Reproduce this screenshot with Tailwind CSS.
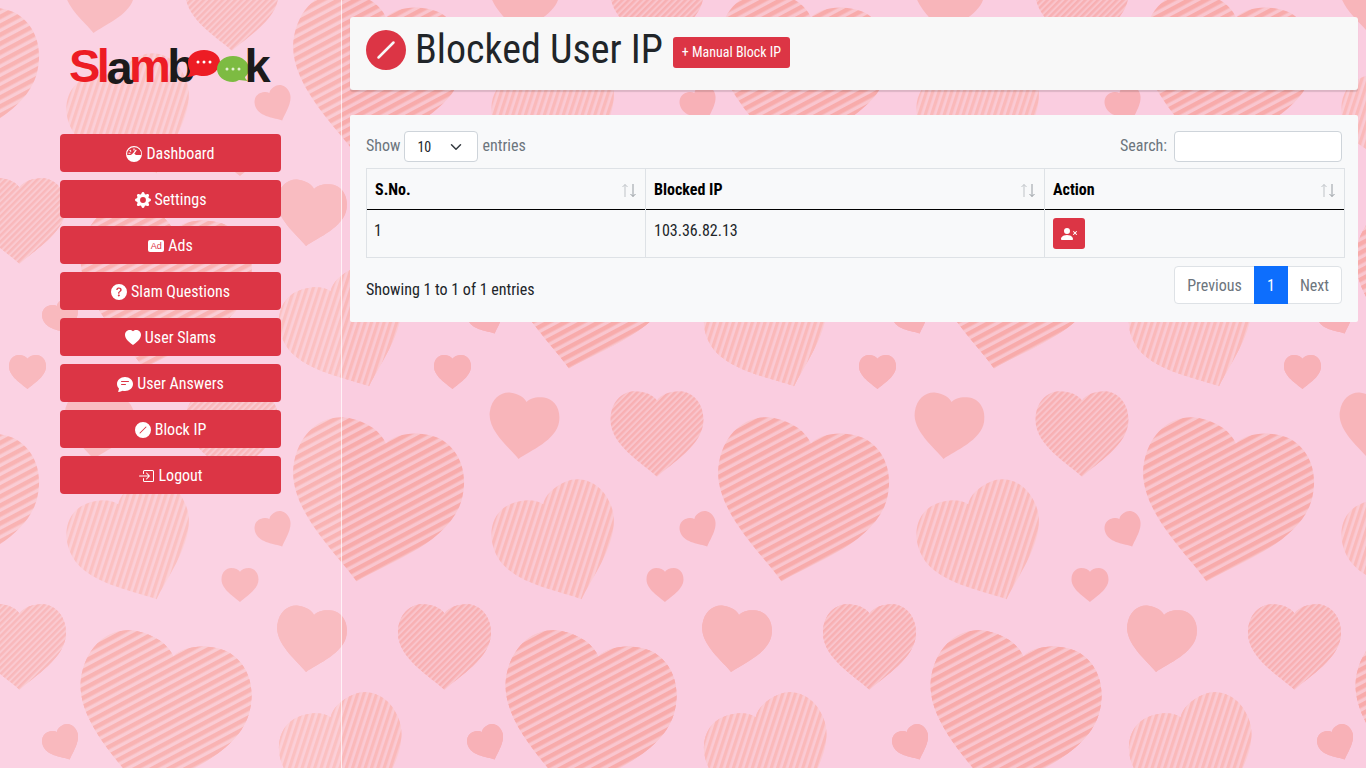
<!DOCTYPE html>
<html lang="en">

<head>
    <meta charset="UTF-8">
    <meta name="viewport" content="width=device-width, initial-scale=1.0">
    <title>Blocked User IP</title>
    <script src="https://cdn.jsdelivr.net/npm/@tailwindcss/browser@4"></script>
</head>

<body class="relative h-[768px] w-[1366px] overflow-hidden bg-[#facde0] font-['Roboto_Condensed',Roboto,sans-serif] font-stretch-condensed">

    <!-- wallpaper: half-drop repeat of six hearts -->
    <svg class="absolute inset-0" width="1366" height="768" aria-hidden="true">
        <defs>
            <pattern id="bigStripe" width="5" height="4.6" patternUnits="userSpaceOnUse" patternTransform="rotate(-40)">
                <rect width="5" height="4.6" fill="#f9c6cf" />
                <rect width="5" height="2.6" fill="#f8abab" />
            </pattern>
            <pattern id="lightStripe" width="5" height="4.8" patternUnits="userSpaceOnUse" patternTransform="rotate(-50)">
                <rect width="5" height="4.8" fill="#facad4" />
                <rect width="5" height="2.6" fill="#fab9ba" />
            </pattern>
            <pattern id="fineStripe" width="5" height="4.8" patternUnits="userSpaceOnUse" patternTransform="rotate(-45)">
                <rect width="5" height="4.8" fill="#f9c4cc" />
                <rect width="5" height="2.6" fill="#f8b0b3" />
            </pattern>
            <path id="heart" d="M0 46C-15 32-50 12-50-15C-50-35-37-46-24-46C-13-46-4-42 0-36C4-42 13-46 24-46C37-46 50-35 50-15C50 12 15 32 0 46Z" />
            <g id="motifs">
                <use href="#heart" fill="url(#bigStripe)" transform="translate(798 504) rotate(12) scale(1.72)" />
                <use href="#heart" fill="url(#lightStripe)" transform="translate(560 546) rotate(-22) scale(1.25)" />
                <use href="#heart" fill="url(#fineStripe)" transform="translate(657 434) scale(.93)" />
                <use href="#heart" fill="#f8b5ba" transform="translate(523 427) rotate(8) scale(.7)" />
                <use href="#heart" fill="#f8b1b7" transform="translate(665 585) scale(.37)" />
                <use href="#heart" fill="#f8b1b7" transform="translate(700 531) rotate(-25) scale(.37)" />
            </g>
            <g id="row">
                <use href="#motifs" x="-850" />
                <use href="#motifs" x="-425" />
                <use href="#motifs" />
                <use href="#motifs" x="425" />
                <use href="#motifs" x="850" />
            </g>
        </defs>
        <use href="#row" y="-426" />
        <use href="#row" x="-212.5" y="-213" />
        <use href="#row" />
        <use href="#row" x="-212.5" y="213" />
        <use href="#row" x="212.5" y="-213" />
        <use href="#row" x="212.5" y="213" />
    </svg>

    <div class="relative flex h-full">
        <!-- sidebar -->
        <aside class="w-[342px] h-full shrink-0 border-r border-white/70 bg-white/10 pl-[60px]">
            <div class="relative mt-[41px] flex h-[50px] w-[221px] items-end pl-[9px] font-['Liberation_Sans',sans-serif] text-[47px] leading-[50px] font-bold tracking-[-3.5px] font-stretch-normal">
                <span class="text-[#ed1c24]">Sl</span><span class="relative top-[2px] text-[#1c1a1b]">a</span><span class="text-[#ed1c24]">m</span><span class="text-[#1c1a1b]">b</span>
                <svg class="absolute left-[124px] top-[8px]" width="82" height="40" viewBox="0 0 82 40">
                    <path d="M20 1C29 1 36 6 36 13S29 27 20 27C17 27 14 26.500 12 26C9 27 6 28 3 28C5 26 6 24 6 22C4.500 19 4 16 4 13C4 6 11 1 20 1Z" fill="#ed1c24" />
                    <circle cx="14" cy="13" r="1.500" fill="#fff" /><circle cx="20" cy="13" r="1.500" fill="#fff" /><circle cx="26" cy="13" r="1.500" fill="#fff" />
                    <g transform="translate(3 0)">
                        <path d="M46 7C55 7 62 13 62 20C62 24 60 26 58 28C58 29 59 31 61 32C58 32 55 31 52 31C50 32 48 33 46 33C37 33 30 27 30 20S37 7 46 7Z" fill="#7dbb42" />
                        <circle cx="40" cy="20" r="1.500" fill="#e4f0d0" /><circle cx="46" cy="20" r="1.500" fill="#e4f0d0" /><circle cx="52" cy="20" r="1.500" fill="#e4f0d0" />
                    </g>
                </svg>
                <span class="relative ml-[52px] text-[#1c1a1b]">k</span>
            </div>

            <nav class="mt-[43px] flex w-[221px] flex-col gap-2 text-base text-white">
                <a class="flex h-[38px] items-center justify-center gap-1 rounded bg-[#dc3545] pt-[2px]">
                    <svg width="16" height="16" viewBox="0 0 16 16" fill="#fff">
                        <path fill-rule="evenodd" d="M8 0a8 8 0 1 1 0 16A8 8 0 0 1 8 0Zm0 1.200A6.800 6.800 0 0 0 1.300 9h3.900c.3-.7.900-1.200 1.600-1.400l3-4 .9.700-2.400 3.400c.6.300 1.200.7 1.500 1.300h5.300A6.800 6.800 0 0 0 8 1.200ZM7.400 2.500h1.200v2H7.400Zm-3.300 1.200 1.400 1.400-.8.8L3.300 4.500Zm-1.600 3h2v1.100h-2Z" />
                    </svg>Dashboard</a>
                <a class="flex h-[38px] items-center justify-center gap-1 rounded bg-[#dc3545] pt-[2px]">
                    <svg width="16" height="16" viewBox="0 0 16 16" fill="#fff">
                        <path d="M9.405 1.05c-.413-1.4-2.397-1.4-2.81 0l-.1.34a1.464 1.464 0 0 1-2.105.872l-.31-.17c-1.283-.698-2.686.705-1.987 1.987l.169.311c.446.82.023 1.841-.872 2.105l-.34.1c-1.4.413-1.4 2.397 0 2.81l.34.1a1.464 1.464 0 0 1 .872 2.105l-.17.31c-.698 1.283.705 2.686 1.987 1.987l.311-.169a1.464 1.464 0 0 1 2.105.872l.1.34c.413 1.4 2.397 1.4 2.81 0l.1-.34a1.464 1.464 0 0 1 2.105-.872l.31.17c1.283.698 2.686-.705 1.987-1.987l-.169-.311a1.464 1.464 0 0 1 .872-2.105l.34-.1c1.4-.413 1.4-2.397 0-2.81l-.34-.1a1.464 1.464 0 0 1-.872-2.105l.17-.31c.698-1.283-.705-2.686-1.987-1.987l-.311.169a1.464 1.464 0 0 1-2.105-.872l-.1-.34zM8 10.93a2.929 2.929 0 1 1 0-5.86 2.929 2.929 0 0 1 0 5.858z" />
                    </svg>Settings</a>
                <a class="flex h-[38px] items-center justify-center gap-1 rounded bg-[#dc3545] pt-[2px]">
                    <span class="flex h-[12px] w-4 items-center justify-center rounded-[2px] bg-white font-['Liberation_Sans',sans-serif] text-[9px] leading-none text-[#dc3545] font-stretch-normal">Ad</span>Ads</a>
                <a class="flex h-[38px] items-center justify-center gap-1 rounded bg-[#dc3545] pt-[2px]">
                    <svg width="16" height="16" viewBox="0 0 16 16" fill="#fff">
                        <path d="M16 8A8 8 0 1 1 0 8a8 8 0 0 1 16 0zM5.496 6.033h.825c.138 0 .248-.113.266-.25.09-.656.54-1.134 1.342-1.134.686 0 1.314.343 1.314 1.168 0 .635-.374.927-.965 1.371-.673.489-1.206 1.06-1.168 1.987l.003.217a.25.25 0 0 0 .25.246h.811a.25.25 0 0 0 .25-.25v-.105c0-.718.273-.927 1.01-1.486.609-.463 1.244-.977 1.244-2.056 0-1.511-1.276-2.241-2.673-2.241-1.267 0-2.655.59-2.75 2.286a.237.237 0 0 0 .241.247zm2.325 6.443c.61 0 1.029-.394 1.029-.927 0-.552-.42-.94-1.029-.94-.584 0-1.009.388-1.009.94 0 .533.425.927 1.01.927z" />
                    </svg>Slam Questions</a>
                <a class="flex h-[38px] items-center justify-center gap-1 rounded bg-[#dc3545] pt-[2px]">
                    <svg width="16" height="16" viewBox="0 0 16 16" fill="#fff">
                        <path fill-rule="evenodd" d="M8 1.314C12.438-3.248 23.534 4.735 8 15-7.534 4.736 3.562-3.248 8 1.314z" />
                    </svg>User Slams</a>
                <a class="flex h-[38px] items-center justify-center gap-1 rounded bg-[#dc3545] pt-[2px]">
                    <svg width="16" height="16" viewBox="0 0 16 16" fill="#fff">
                        <path d="M16 8c0 3.866-3.582 7-8 7a9.060 9.060 0 0 1-2.347-.306c-.584.296-1.925.864-4.181 1.234-.2.032-.352-.176-.273-.362.354-.836.674-1.950.770-2.966C.744 11.370 0 9.760 0 8c0-3.866 3.582-7 8-7s8 3.134 8 7zM4.500 5a.5.5 0 0 0 0 1h7a.5.5 0 0 0 0-1h-7zm0 3a.5.5 0 0 0 0 1h4a.5.5 0 0 0 0-1h-4z" />
                    </svg>User Answers</a>
                <a class="flex h-[38px] items-center justify-center gap-1 rounded bg-[#dc3545] pt-[2px]">
                    <svg width="16" height="16" viewBox="0 0 16 16" fill="#fff">
                        <path d="M16 8A8 8 0 1 1 0 8a8 8 0 0 1 16 0zm-4.646-2.646a.5.5 0 0 0-.708-.708l-6 6a.5.5 0 0 0 .708.708l6-6z" />
                    </svg>Block IP</a>
                <a class="flex h-[38px] items-center justify-center gap-1 rounded bg-[#dc3545] pt-[2px]">
                    <svg width="16" height="16" viewBox="0 0 16 16" fill="#fff">
                        <path fill-rule="evenodd" d="M6 3.5a.5.5 0 0 1 .5-.5h8a.5.5 0 0 1 .5.5v9a.5.5 0 0 1-.5.5h-8a.5.5 0 0 1-.5-.5v-2a.5.5 0 0 0-1 0v2A1.500 1.500 0 0 0 6.500 14h8a1.500 1.500 0 0 0 1.500-1.500v-9A1.500 1.500 0 0 0 14.500 2h-8A1.500 1.500 0 0 0 5 3.500v2a.5.5 0 0 0 1 0v-2z" />
                        <path fill-rule="evenodd" d="M11.854 8.354a.5.5 0 0 0 0-.708l-3-3a.5.5 0 1 0-.708.708L10.293 7.500H1.500a.5.5 0 0 0 0 1h8.793l-2.147 2.146a.5.5 0 0 0 .708.708l3-3z" />
                    </svg>Logout</a>
            </nav>
        </aside>

        <!-- main -->
        <main class="ml-2 w-[1008px] pt-[17px]">
            <div class="flex h-[73px] items-center rounded-[3px] bg-[#f8f8f8] pb-[7px] pl-4 shadow-[0_2px_1px_rgba(0,0,0,0.12)]">
                <svg width="40" height="40" viewBox="0 0 16 16" fill="#dc3545">
                    <path d="M16 8A8 8 0 1 1 0 8a8 8 0 0 1 16 0zm-4.646-2.646a.5.5 0 0 0-.708-.708l-6 6a.5.5 0 0 0 .708.708l6-6z" />
                </svg>
                <h1 class="ml-[9px] text-[40px] leading-[48px] text-[#212529]">Blocked User IP</h1>
                <a class="ml-[10px] mt-1 flex h-[31px] w-[117px] items-center justify-center rounded-[3px] bg-[#dc3545] text-sm text-white">+ Manual Block IP</a>
            </div>

            <div class="mt-[25px] h-[207px] rounded-[2px] bg-[#f8f9fa] px-4 pt-4">
                <div class="flex h-[31px] w-[976px] items-center text-base text-[#6c757d]">
                    <span class="pb-[2px]">Show</span>
                    <div class="ml-1 flex h-[31px] w-[74px] items-center justify-between rounded border border-[#ced4da] bg-white pl-3 pr-[15px] text-sm text-[#212529]">
                        10
                        <svg width="12" height="12" viewBox="0 0 16 16" fill="none" stroke="#343a40" stroke-width="2" stroke-linecap="round" stroke-linejoin="round">
                            <path d="m2 5 6 6 6-6" />
                        </svg>
                    </div>
                    <span class="ml-1 pb-[2px]">entries</span>
                    <span class="ml-auto pb-[2px]">Search:</span>
                    <div class="ml-[7px] h-[31px] w-[168px] rounded border border-[#ced4da] bg-white"></div>
                </div>

                <table class="mt-[6px] w-[979px] table-fixed border-collapse text-base">
                    <thead>
                        <tr class="h-[41px] text-left text-black">
                            <th class="w-[279px] border border-b-0 border-[#dee2e6] px-2 pt-[2px] font-bold">
                                <div class="flex items-center justify-between">S.No.
                                    <svg width="16" height="15" viewBox="0 0 16 15" fill="none" stroke-width="1"><path d="M4 14V1.500M1.500 4 4 1.500 6.500 4" stroke="#bfc3c7" /><path d="M12 1v12.500M9.500 11 12 13.500 14.500 11" stroke="#969ca2" /></svg>
                                </div>
                            </th>
                            <th class="w-[399px] border border-b-0 border-[#dee2e6] px-2 pt-[2px] font-bold">
                                <div class="flex items-center justify-between">Blocked IP
                                    <svg width="16" height="15" viewBox="0 0 16 15" fill="none" stroke-width="1"><path d="M4 14V1.500M1.500 4 4 1.500 6.500 4" stroke="#bfc3c7" /><path d="M12 1v12.500M9.500 11 12 13.500 14.500 11" stroke="#969ca2" /></svg>
                                </div>
                            </th>
                            <th class="border border-b-0 border-[#dee2e6] px-2 pt-[2px] font-bold">
                                <div class="flex items-center justify-between">Action
                                    <svg width="16" height="15" viewBox="0 0 16 15" fill="none" stroke-width="1"><path d="M4 14V1.500M1.500 4 4 1.500 6.500 4" stroke="#bfc3c7" /><path d="M12 1v12.500M9.500 11 12 13.500 14.500 11" stroke="#969ca2" /></svg>
                                </div>
                            </th>
                        </tr>
                    </thead>
                    <tbody>
                        <tr class="h-[48px] border-t border-black text-[#212529]">
                            <td class="border-x border-b border-[#dee2e6] pl-[7px] pr-2 pb-[5px] align-middle">1</td>
                            <td class="border-x border-b border-[#dee2e6] px-2 pb-[5px] align-middle">103.36.82.13</td>
                            <td class="border-x border-b border-[#dee2e6] px-2">
                                <a class="flex h-[31px] w-8 items-center justify-center rounded-[3px] bg-[#dc3545]">
                                    <svg width="16" height="16" viewBox="0 0 16 16" fill="#fff">
                                        <path fill-rule="evenodd" d="M1 14s-1 0-1-1 1-4 6-4 6 3 6 4-1 1-1 1H1zm5-6a3 3 0 1 0 0-6 3 3 0 0 0 0 6zm6.146-2.854a.5.5 0 0 1 .708 0L14 6.293l1.146-1.147a.5.5 0 0 1 .708.708L14.707 7l1.147 1.146a.5.5 0 0 1-.708.708L14 7.707l-1.146 1.147a.5.5 0 0 1-.708-.708L13.293 7l-1.147-1.146a.5.5 0 0 1 0-.708z" />
                                    </svg>
                                </a>
                            </td>
                        </tr>
                    </tbody>
                </table>

                <div class="mt-2 flex w-[976px] items-start justify-between text-base">
                    <span class="mt-[12px] text-[#212529]">Showing 1 to 1 of 1 entries</span>
                    <div class="flex h-[38px] rounded border border-[#dee2e6] bg-white text-[#6c757d]">
                        <span class="flex w-[79px] items-center justify-center pt-[2px]">Previous</span>
                        <span class="-my-px flex w-[34px] items-center justify-center bg-[#0d6efd] pt-[2px] text-white">1</span>
                        <span class="flex w-[53px] items-center justify-center pt-[2px]">Next</span>
                    </div>
                </div>
            </div>
        </main>
    </div>

</body>

</html>
